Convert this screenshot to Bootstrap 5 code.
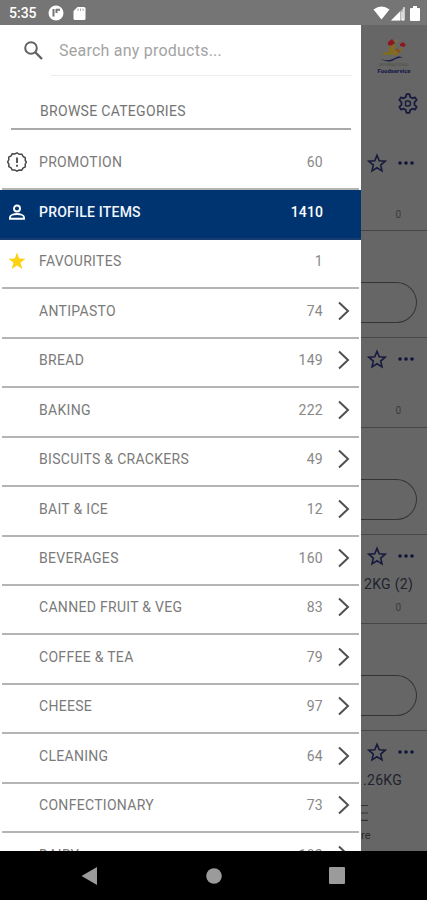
<!DOCTYPE html>
<html lang="en">
<head>
<meta charset="utf-8">
<meta name="viewport" content="width=device-width, initial-scale=1">
<title>Browse categories</title>
<link href="https://cdn.jsdelivr.net/npm/bootstrap@5.3.0/dist/css/bootstrap.min.css" rel="stylesheet">
<style>
body{font-family:Roboto,"Liberation Sans",sans-serif;font-size:14px;line-height:20px;background:#000}
svg{display:block;flex:none}
.screen{width:427px;height:900px}
.status{height:25px;background:#757575;color:#fff;padding:1px 7px 0 9px;font-size:14px;font-weight:500}
.status .app{margin-left:11px}
.status .sd{margin-left:9px}
.status .batt{margin-left:4px}
.stage{height:826px}
.drawer{width:361px;background:#fff;color:#7a7a7a}
.search{height:51px;padding-left:23px}
.search-field{margin-left:7px;width:301px;height:50px;border-bottom:1px solid #ececec;padding:2px 0 0 8px;font-size:16px;letter-spacing:.23px;color:#a3a3a3}
.heading{width:340px;height:54px;margin-left:11px;padding:25px 0 0 29px;border-bottom:2px solid #a9a9a9;color:#747474;letter-spacing:.3px}
.cats{padding-top:11px}
.cat{height:49.44px;margin:0 2px;padding:0 9px 4.500px 5px;border-bottom:2px solid #b4b4b4}
.cat .ico{width:20px}
.cat .label{margin-left:12px;letter-spacing:.3px}
.cat .num{letter-spacing:.3px;color:#888}
.cat .go{width:14px;margin-left:13px}
.cat .go svg{margin-left:1px}
.cat.chosen{margin:0;padding-left:7px;padding-right:11px;background:#003470;border-color:#173c70;color:#f4f6ff;font-weight:500}
.cat.chosen .label{letter-spacing:.22px}
.cat.chosen .num{color:#fff;letter-spacing:.1px}
.side{width:66px;background:#666;color:#20222d}
.logo-area{height:117px;padding-top:13px}
.gear{margin:18px 9px 0 auto}
.brand-top{font-size:4px;line-height:4px;color:#4c5142}
.brand{font-size:6px;line-height:8px;font-weight:900;color:#1b1d4a}
.item{height:89.4px;border-bottom:1.5px solid #464646}
.item.last{height:119px;border:0}
.acts{height:24px;padding:0 13px 0 6px;margin-top:9px}
.desc{height:20px;margin-top:6px;padding-left:3px;font-size:14px;letter-spacing:.3px;white-space:nowrap}
.last .desc{padding-left:2px}
.qty{height:14px;line-height:14px;margin-top:7px;font-size:10px;padding-right:26px;color:#3b3b3b}
.burger{margin-top:10px}
.foot{margin-top:5px;font-size:11px;color:#2b2b2b}
.order{height:107px;border-bottom:1.5px solid #484848;padding-top:51px}
.pill{width:56px;height:41px;border:1.5px solid #343434;border-left:0;border-radius:0 21px 21px 0}
.nav-keys{height:49px;background:#000;padding:0 82px 0 81px}
</style>
<script src="https://cdn.jsdelivr.net/npm/bootstrap@5.3.0/dist/js/bootstrap.bundle.min.js"></script>
</head>
<body>
<svg width="0" height="0" class="position-absolute" aria-hidden="true">
<symbol id="chev" viewBox="0 0 14 20"><path d="M2 1.500 11 10 2 18.500" fill="none" stroke="#505050" stroke-width="2"/></symbol>
<symbol id="star" viewBox="0 0 24 24"><path d="m12 2.800 2.700 6.500 7 .6-5.300 4.600 1.600 6.900-6-3.700-6 3.700 1.600-6.900L2.300 9.900l7-.6z" fill="none" stroke="#171a3c" stroke-width="1.900"/></symbol>
<symbol id="dots" viewBox="0 0 16 4"><g fill="#10133a"><circle cx="2" cy="2" r="1.800"/><circle cx="8" cy="2" r="1.800"/><circle cx="14" cy="2" r="1.800"/></g></symbol>
</svg>
<div class="screen d-flex flex-column overflow-hidden">
<header class="status d-flex align-items-center">
<span>5:35</span>
<svg class="app" width="16" height="16" viewBox="0 0 16 16"><circle cx="8" cy="8" r="7.500" fill="#fff"/><path d="M5.500 4v7.500M8.500 4v4M8 4.800h4" stroke="#757575" stroke-width="2" fill="none"/></svg>
<svg class="sd" width="13" height="15" viewBox="0 0 13 15"><path d="M4.500 1H11q1.500 0 1.500 1.500v10q0 1.500-1.500 1.500H2Q.5 14 .5 12.500V5z" fill="#fff"/><path d="M5 2.500v2.500M7.500 2.500v2.500M10 2.500v2.500" stroke="#aaa"/></svg>
<svg class="ms-auto" width="17" height="14" viewBox="0 0 17 14"><path d="M.5 3.500Q8.500-2.500 16.500 3.500L8.500 13.500z" fill="#fff"/></svg>
<svg width="16" height="15" viewBox="0 0 16 15"><path d="M1 14.500 14.500 1v13.500z" fill="#b5b5b5"/><path d="M1 14.500 10 5.500v9z" fill="#fff"/><path d="M12 6v8h2V1" stroke="#fff" fill="none"/></svg>
<svg class="batt" width="10" height="15" viewBox="0 0 10 15"><path d="M3 0h4v2h2q1 0 1 1v11q0 1-1 1H1q-1 0-1-1V3q0-1 1-1h2z" fill="#fff"/></svg>
</header>
<main class="stage d-flex overflow-hidden">
<aside class="drawer flex-shrink-0 overflow-hidden">
<div class="search d-flex align-items-center">
<svg width="21" height="21" viewBox="0 0 21 21"><circle cx="8" cy="8" r="5.800" fill="none" stroke="#626262" stroke-width="2"/><path d="m12.500 12.500 6.500 6.500" stroke="#626262" stroke-width="2.400"/></svg>
<div class="search-field d-flex align-items-center">Search any products...</div>
</div>
<div class="heading">BROWSE CATEGORIES</div>
<div class="cats" id="cats"></div>
</aside>
<section class="side overflow-hidden">
<div class="logo-area">
<svg class="mx-auto" width="28" height="25" viewBox="0 0 28 25"><path d="m8 4 4-3 3 4-3 3-4-1zM20 6l3-2 3 3-2 2-4-1z" fill="#8e1820"/><path d="m14 3 5-1-2 3z" fill="#827142"/><path d="M15 7c-5 2-6 4-5 6l7 1 5-3M15 8l-3 4M3 16c5-1 10-2 15 1" fill="none" stroke="#846b21" stroke-width="2.500"/><path d="m16 11 4 3" stroke="#8a491f" stroke-width="2"/><path d="M1 21c7 3 12 0 16-2 2-1 4 0 6 1-5-1-7 1-11 3-4 1-8 0-11-2z" fill="#191c4b"/></svg>
<div class="brand-top text-center">INTERNATIONAL</div>
<div class="brand text-center">Foodservice</div>
<svg class="gear" width="20" height="21" viewBox="0 0 20 21"><path d="m7.800 4 .7-2.800h3l.7 2.800 2.100 1.300 2.800-.9 1.600 2.700-2.200 2v2.800l2.200 2-1.600 2.700-2.800-.9-2.100 1.300-.7 2.800h-3L7.800 17l-2.100-1.300-2.800.9-1.600-2.700 2.200-2V9.100l-2.200-2 1.600-2.700 2.800.9z" fill="none" stroke="#171a3c" stroke-width="1.800" stroke-linejoin="round"/><path d="M7.500 8v5M7.500 8h2.500q2.500 0 2.500 2.500T10 13H7.500" fill="none" stroke="#171a3c" stroke-width="1.400"/></svg>
</div>
<div id="items"></div>
</section>
</main>
<footer class="nav-keys d-flex align-items-center justify-content-between">
<svg width="17" height="18" viewBox="0 0 17 18"><path d="M.5 9 16 0v18z" fill="#9b9b9b"/></svg>
<svg width="16" height="16" viewBox="0 0 16 16"><circle cx="8" cy="8" r="7.800" fill="#9b9b9b"/></svg>
<svg width="16" height="17" viewBox="0 0 16 17"><rect width="16" height="17" rx="1" fill="#9b9b9b"/></svg>
</footer>
</div>
<script>
const icons={
PROMOTION:'<svg width="20" height="20" viewBox="0 0 20 20"><path d="m10 .9 2.300 1.400 2.600-.1 1.200 2.300 2.200 1.300-.1 2.700L19.400 10l-1.200 2.200.1 2.600-2.300 1.200-1.300 2.200-2.600-.1L10 19.100l-2.200-1.200-2.600.1L4 15.800l-2.200-1.200.1-2.500L.6 10l1.200-2.200-.1-2.600L4 4l1.300-2.200 2.500.1z" fill="none" stroke="#484848" stroke-width="1.500"/><path d="M10 5.500v5.500M10 12.800v2" stroke="#484848" stroke-width="1.800"/></svg>',
'PROFILE ITEMS':'<svg width="20" height="20" viewBox="0 0 20 20"><circle cx="10" cy="6.500" r="3" fill="none" stroke="#fff" stroke-width="1.900"/><path d="M3 16.800v-1.600C3 13 7 12 10 12s7 1 7 3.200v1.600z" fill="none" stroke="#fff" stroke-width="1.900"/></svg>',
FAVOURITES:'<svg width="20" height="20" viewBox="0 0 20 20"><path d="m10 1.500 2.200 6 6.300.3-5 4 1.800 6.300-5.300-3.600-5.300 3.600 1.800-6.300-5-4 6.300-.3z" fill="#fbd313"/></svg>'};
const cats=[['PROMOTION',60],['PROFILE ITEMS',1410],['FAVOURITES',1],['ANTIPASTO',74],['BREAD',149],['BAKING',222],['BISCUITS & CRACKERS',49],['BAIT & ICE',12],['BEVERAGES',160],['CANNED FRUIT & VEG',83],['COFFEE & TEA',79],['CHEESE',97],['CLEANING',64],['CONFECTIONARY',73],['DAIRY',182]];
document.getElementById('cats').innerHTML=cats.map(([n,c],i)=>`<div class="cat d-flex align-items-center${i==1?' chosen':''}"><span class="ico">${icons[n]||''}</span><span class="label">${n.replace('&','&amp;')}</span><span class="num ms-auto">${c}</span><span class="go">${i>2?'<svg width="14" height="20"><use href="#chev"/></svg>':''}</span></div>`).join('');
const items=[['','0'],['','0'],['2KG (2)','0'],['.26KG','']];
document.getElementById('items').innerHTML=items.map(([d,q],i)=>`<div class="item overflow-hidden${i==3?' last':''}"><div class="acts d-flex align-items-center justify-content-between"><svg width="20" height="20"><use href="#star"/></svg><svg width="16" height="4"><use href="#dots"/></svg></div><div class="desc">${d}</div>${i<3?`<div class="qty text-end">${q}</div>`:'<svg class="burger" width="8" height="21" viewBox="0 0 8 21"><path d="M0 5.500h7M0 13h7M0 20.300h7" stroke="#333" stroke-width="1.200"/></svg><div class="foot">re</div>'}</div>${i<3?'<div class="order"><div class="pill"></div></div>':''}`).join('');
</script>
</body>
</html>
